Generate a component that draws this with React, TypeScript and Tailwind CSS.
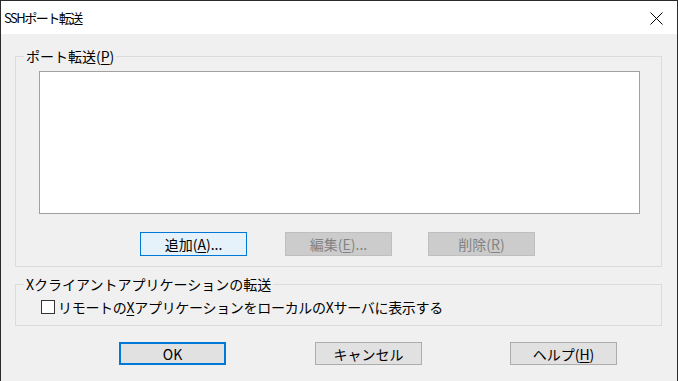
const FONT = "font-['Noto_Sans_CJK_JP','Noto_Sans',sans-serif]";

function Btn({
  children,
  variant = "normal",
  h = "h-[24px]",
}: {
  children: React.ReactNode;
  variant?: "normal" | "focus" | "default" | "disabled";
  h?: string;
}) {
  const styles = {
    normal: "border border-[#adadad] bg-[#e1e1e1] text-black",
    focus: "border border-[#0078d7] bg-[#e5f1fb] text-black",
    default: "border-2 border-[#0078d7] bg-[#e1e1e1] text-black",
    disabled: "border border-[#bfbfbf] bg-[#cccccc] text-[#838383]",
  }[variant];
  return (
    <div
      className={`${h} w-[107px] flex items-center justify-center text-[14px] leading-none ${styles}`}
    >
      {children}
    </div>
  );
}

export default function App() {
  return (
    <div
      className={`w-[678px] h-[381px] overflow-hidden border-x border-t border-[#2b2b2b] bg-[#f0f0f0] ${FONT}`}
    >
      {/* title bar */}
      <div className="h-[33px] bg-white flex items-center justify-between pl-[3px] pr-[14px]">
        <span className="text-[13px] tracking-[-1.5px] text-black leading-none">
          SSHポート転送
        </span>
        <svg width="13" height="13" viewBox="0 0 13 13" className="mt-[1px]">
          <path d="M0.5 0.5 L12.5 12.5 M12.5 0.5 L0.5 12.5" stroke="#000" strokeWidth="1" />
        </svg>
      </div>

      <div className="flex flex-col pl-[14px] pt-[12px] text-black">
        {/* port forwarding group */}
        <fieldset className="w-[647px] border border-[#dcdcdc] p-0 m-0">
          <legend className="ml-[8px] px-[2px] text-[14px] leading-[20px]">
            ポート転送(<u className="underline-offset-2">P</u>)
          </legend>
          <div className="pl-[23px] pt-[5px] pb-[10px]">
            <div className="w-[601px] h-[143px] bg-white border border-[#a0a0a0]" />
            <div className="flex mt-[18px] ml-[101px]">
              <Btn variant="focus">
                追加(<u className="underline-offset-2">A</u>)...
              </Btn>
              <div className="ml-[38px]">
                <Btn variant="disabled">
                  編集(<u className="underline-offset-2">E</u>)...
                </Btn>
              </div>
              <div className="ml-[36px]">
                <Btn variant="disabled">
                  削除(<u className="underline-offset-2">R</u>)
                </Btn>
              </div>
            </div>
          </div>
        </fieldset>

        {/* X forwarding group */}
        <fieldset className="w-[647px] border border-[#dcdcdc] p-0 m-0 mt-[7px]">
          <legend className="ml-[8px] px-[2px] text-[14px] leading-[20px]">
            Xクライアントアプリケーションの転送
          </legend>
          <div className="pl-[25px] pt-[3px] pb-[8px]">
            <div className="h-[20px] flex items-center gap-[3px] text-[14px] leading-none">
              <span className="w-[14px] h-[14px] border border-[#333333] bg-white" />
              <span className="tracking-[-0.3px]">
                リモートの<u className="underline-offset-2">X</u>
                アプリケーションをローカルのXサーバに表示する
              </span>
            </div>
          </div>
        </fieldset>

        {/* dialog buttons */}
        <div className="flex mt-[16px] ml-[104px]">
          <Btn variant="default" h="h-[23px]">
            OK
          </Btn>
          <div className="ml-[89px]">
            <Btn h="h-[23px]">キャンセル</Btn>
          </div>
          <div className="ml-[88px]">
            <Btn h="h-[23px]">
              ヘルプ(<u className="underline-offset-2">H</u>)
            </Btn>
          </div>
        </div>
      </div>
    </div>
  );
}
